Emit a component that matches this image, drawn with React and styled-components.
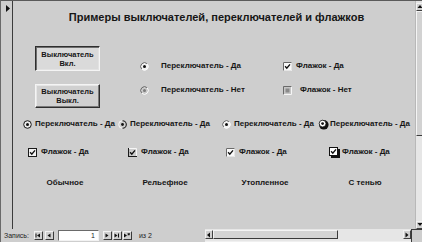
import React from "react";
import styled, { createGlobalStyle } from "styled-components";

const GlobalStyle = createGlobalStyle`
  html, body { margin: 0; padding: 0; background: #cecece; }
  body { font-family: "Liberation Sans", Arial, sans-serif; color: #161616; }
`;

const Window = styled.div`
  width: 422px;
  height: 242px;
  box-sizing: border-box;
  display: flex;
  flex-direction: column;
  background: #cecece;
  border-top: 1px solid #5a5a5a;
  border-left: 1px solid #6a6a6a;
  overflow: hidden;
`;

const Main = styled.div`
  display: flex;
  height: 228px;
  flex: none;
`;

const Selector = styled.div`
  width: 12px;
  flex: none;
  box-sizing: border-box;
  border-right: 1px solid #3c3c3c;
  padding: 4px 0 0 5px;
  svg { display: block; }
`;

const Body = styled.div`
  flex: 1;
  display: flex;
  flex-direction: column;
  padding-top: 10px;
`;

const Title = styled.h1`
  margin: 0;
  padding-left: 5px;
  font-size: 11px;
  line-height: 13px;
  font-weight: bold;
  text-align: center;
  white-space: nowrap;
`;

const Upper = styled.div`
  display: flex;
  margin-top: 22px;
  padding-left: 22px;
`;

const ButtonCol = styled.div`
  display: flex;
  flex-direction: column;
  gap: 13px;
`;

const Toggle = styled.div`
  width: 65px;
  height: ${(p) => (p.$pressed ? 25 : 24)}px;
  box-sizing: border-box;
  display: flex;
  flex-direction: column;
  align-items: center;
  justify-content: center;
  font-size: 7.5px;
  line-height: 9px;
  font-weight: bold;
  border: 1px solid;
  border-color: ${(p) =>
    p.$pressed ? "#2e2e2e #f4f4f4 #f4f4f4 #2e2e2e" : "#f4f4f4 #2e2e2e #2e2e2e #f4f4f4"};
  box-shadow: ${(p) =>
    p.$pressed
      ? "inset 1px 1px 0 #6e6e6e, inset -1px -1px 0 #e2e2e2"
      : "inset -1px -1px 0 #7a7a7a, inset 1px 1px 0 #e6e6e6"};
  background: ${(p) => (p.$pressed ? "#dadada" : "#d0d0d0")};
  padding-top: ${(p) => (p.$pressed ? 1 : 0)}px;
`;

const Options = styled.div`
  display: grid;
  grid-template-columns: 143px auto;
  grid-template-rows: 12px 12px;
  row-gap: 12px;
  padding-top: 14px;
  margin-left: 40px;
`;

const Item = styled.div`
  display: flex;
  align-items: center;
  gap: ${(p) => p.$gap ?? 4}px;
  margin-left: ${(p) => p.$indent ?? 0}px;
  font-size: 8px;
  line-height: 12px;
  font-weight: bold;
  white-space: nowrap;
  height: 12px;
  svg { display: block; flex: none; }
`;

const Grid4 = styled.div`
  display: grid;
  grid-template-columns: repeat(4, 100px);
  margin-left: 2px;
  margin-top: ${(p) => p.$top}px;
  height: 12px;
`;

const Caption = styled.div`
  text-align: center;
  font-size: 8px;
  line-height: 12px;
  font-weight: bold;
  white-space: nowrap;
`;

/* scrollbars */
const VScroll = styled.div`
  width: 11px;
  flex: none;
  box-sizing: border-box;
  border-left: 1px solid #b8b8b8;
  border-right: 2px solid #3a3a3a;
  background: #e2e2e2;
  display: flex;
  flex-direction: column;
  padding-top: 2px;
`;

const ArrowBtn = styled.div`
  flex: none;
  width: ${(p) => p.$w}px;
  height: ${(p) => p.$h}px;
  box-sizing: border-box;
  background: #cfcfcf;
  border: 1px solid;
  border-color: #f2f2f2 #404040 #404040 #f2f2f2;
  display: flex;
  align-items: center;
  justify-content: center;
  svg { display: block; }
`;

const VThumb = styled.div`
  flex: none;
  height: ${(p) => p.$len}px;
  box-sizing: border-box;
  background: #d2d2d2;
  border: 1px solid;
  border-color: #f4f4f4 #3c3c3c #3c3c3c #f4f4f4;
`;

const Track = styled.div`
  flex: 1;
  background: #e6e6e6;
`;

const Bottom = styled.div`
  display: flex;
  height: 13px;
  flex: none;
`;

const Nav = styled.div`
  width: 204px;
  flex: none;
  display: flex;
  align-items: center;
  padding-left: 3px;
  box-sizing: border-box;
  font-size: 7px;
  color: #222;
`;

const NavLabel = styled.span`
  margin-right: ${(p) => p.$mr ?? 0}px;
  margin-left: ${(p) => p.$ml ?? 0}px;
  white-space: nowrap;
`;

const NavBtn = styled.div`
  width: 9px;
  height: 9px;
  box-sizing: border-box;
  margin-right: ${(p) => p.$mr ?? 1}px;
  border: 1px solid;
  border-color: #f2f2f2 #3a3a3a #3a3a3a #f2f2f2;
  background: #cfcfcf;
  display: flex;
  align-items: center;
  justify-content: center;
  svg { display: block; }
`;

const RecordInput = styled.div`
  width: 41px;
  height: 11px;
  box-sizing: border-box;
  margin: 0 4px 0 3px;
  background: #fff;
  border: 1px solid;
  border-color: #6a6a6a #f2f2f2 #f2f2f2 #6a6a6a;
  font-size: 7px;
  line-height: 9px;
  text-align: right;
  padding-right: 3px;
`;

const HScroll = styled.div`
  flex: 1;
  display: flex;
  align-items: stretch;
  padding: 1px 0 2px;
  background: #e6e6e6;
  border-bottom: 1px solid #f0f0f0;
`;

const HThumb = styled.div`
  width: 125px;
  flex: none;
  box-sizing: border-box;
  background: #d4d4d4;
  border: 1px solid;
  border-color: #f4f4f4 #3a3a3a #3a3a3a #f4f4f4;
`;

const Corner = styled.div`
  width: 11px;
  flex: none;
  background: #cecece;
  border-left: 1px solid #3a3a3a;
  border-top: 1px solid #3a3a3a;
  box-sizing: border-box;
`;

/* icons */
const Radio = ({ kind }) => {
  if (kind === "plain")
    return (
      <svg width="9" height="9" viewBox="0 0 9 9">
        <circle cx="4.5" cy="4.5" r="3.8" fill="#ececec" stroke="#1a1a1a" strokeWidth="1" />
        <circle cx="4.5" cy="4.5" r="1.5" fill="#111" />
      </svg>
    );
  if (kind === "etched")
    return (
      <svg width="9" height="9" viewBox="0 0 9 9">
        <path d="M4.5 0.7 A3.8 3.8 0 0 0 4.5 8.3" stroke="#f6f6f6" strokeWidth="1" fill="none" />
        <path d="M4.5 0.7 A3.8 3.8 0 0 1 4.5 8.3" stroke="#1a1a1a" strokeWidth="1.1" fill="none" />
        <circle cx="4.5" cy="4.5" r="1.4" fill="#111" />
      </svg>
    );
  if (kind === "shadow")
    return (
      <svg width="11" height="11" viewBox="0 0 11 11">
        <circle cx="5.8" cy="5.8" r="4.8" fill="#111" />
        <circle cx="4.6" cy="4.6" r="3.4" fill="#fff" stroke="#111" strokeWidth="0.8" />
        <circle cx="4.6" cy="4.6" r="1.4" fill="#111" />
      </svg>
    );
  const off = kind === "disabled";
  return (
    <svg width="9" height="9" viewBox="0 0 9 9">
      <circle cx="4.5" cy="4.5" r="3.8" fill={off ? "#c9c9c9" : "#f2f2f2"} />
      <path d="M1.8 7.2 A3.8 3.8 0 0 1 7.2 1.8" stroke="#6a6a6a" strokeWidth="1" fill="none" />
      <path d="M7.2 1.8 A3.8 3.8 0 0 1 1.8 7.2" stroke="#fafafa" strokeWidth="1" fill="none" />
      <circle cx="4.5" cy="4.5" r="1.5" fill={off ? "#7c7c7c" : "#111"} />
    </svg>
  );
};

const CheckMark = () => (
  <path d="M2.1 4.3 L3.8 6.2 L7 2.4" stroke="#111" strokeWidth="1.4" fill="none" />
);

const Check = ({ kind }) => {
  if (kind === "plain")
    return (
      <svg width="9" height="9" viewBox="0 0 9 9">
        <rect x="0.5" y="0.5" width="8" height="8" fill="#f2f2f2" stroke="#1a1a1a" />
        <CheckMark />
      </svg>
    );
  if (kind === "etched")
    return (
      <svg width="9" height="9" viewBox="0 0 9 9">
        <path d="M0.5 0 V8.5 H9" stroke="#1a1a1a" strokeWidth="1.2" fill="none" />
        <path d="M1 0.5 H8.5 V8" stroke="#f6f6f6" strokeWidth="1" fill="none" />
        <CheckMark />
      </svg>
    );
  if (kind === "shadow")
    return (
      <svg width="11" height="11" viewBox="0 0 11 11">
        <rect x="2" y="2" width="9" height="9" fill="#111" />
        <rect x="0.5" y="0.5" width="8" height="8" fill="#fff" stroke="#111" />
        <CheckMark />
      </svg>
    );
  if (kind === "disabled")
    return (
      <svg width="9" height="9" viewBox="0 0 9 9">
        <rect x="0" y="0" width="9" height="9" fill="#c6c6c6" />
        <path d="M0.5 9 V0.5 H9" stroke="#6a6a6a" fill="none" />
        <path d="M8.5 0.5 V8.5 H0.5" stroke="#f6f6f6" fill="none" />
        <rect x="2.5" y="2.5" width="4" height="4" fill="#8a8a8a" />
      </svg>
    );
  return (
    <svg width="9" height="9" viewBox="0 0 9 9">
      <rect x="0" y="0" width="9" height="9" fill="#fafafa" />
      <path d="M0.5 9 V0.5 H9" stroke="#6a6a6a" fill="none" />
      <path d="M8.5 0.5 V8.5 H0.5" stroke="#e6e6e6" fill="none" />
      <CheckMark />
    </svg>
  );
};

const Tri = ({ dir }) => {
  const d = {
    up: "M0.5 4 L3 1 L5.5 4 Z",
    down: "M0.5 1 L3 4 L5.5 1 Z",
    left: "M4 0.5 L1 3 L4 5.5 Z",
    right: "M1.5 0.5 L4.5 3 L1.5 5.5 Z",
  }[dir];
  return (
    <svg width="6" height="6" viewBox="0 0 6 6">
      <path d={d} fill="#111" />
    </svg>
  );
};

const NavGlyph = ({ kind }) => {
  const parts = {
    first: (
      <>
        <rect x="0.5" y="0.5" width="1" height="4" fill="#111" />
        <path d="M5 0.5 L2 2.5 L5 4.5 Z" fill="#111" />
      </>
    ),
    prev: <path d="M4.5 0.5 L1.5 2.5 L4.5 4.5 Z" fill="#111" />,
    next: <path d="M1.5 0.5 L4.5 2.5 L1.5 4.5 Z" fill="#111" />,
    last: (
      <>
        <path d="M0.5 0.5 L3.5 2.5 L0.5 4.5 Z" fill="#111" />
        <rect x="4" y="0.5" width="1" height="4" fill="#111" />
      </>
    ),
    new: (
      <>
        <path d="M0 0.5 L3 2.5 L0 4.5 Z" fill="#111" />
        <path d="M3.5 1.2 H6 M4.75 0 V2.5 M3.8 0.3 L5.7 2.2 M5.7 0.3 L3.8 2.2" stroke="#111" strokeWidth="0.7" />
      </>
    ),
  }[kind];
  return (
    <svg width="6" height="5" viewBox="0 0 6 5">
      {parts}
    </svg>
  );
};

const lowerRadios = [
  { kind: "plain", indent: 8 },
  { kind: "etched", indent: 3 },
  { kind: "sunken", indent: 7 },
  { kind: "shadow", indent: 3 },
];
const lowerChecks = [
  { kind: "plain", indent: 13 },
  { kind: "etched", indent: 13 },
  { kind: "sunken", indent: 11 },
  { kind: "shadow", indent: 14 },
];
const captions = ["Обычное", "Рельефное", "Утопленное", "С тенью"];

export default function App() {
  return (
    <>
      <GlobalStyle />
      <Window>
        <Main>
          <Selector>
            <svg width="4" height="7" viewBox="0 0 4 7">
              <path d="M0 0 L4 3.5 L0 7 Z" fill="#111" />
            </svg>
          </Selector>
          <Body>
            <Title>Примеры выключателей, переключателей и флажков</Title>
            <Upper>
              <ButtonCol>
                <Toggle $pressed>
                  <span>Выключатель</span>
                  <span>Вкл.</span>
                </Toggle>
                <Toggle>
                  <span>Выключатель</span>
                  <span>Выкл.</span>
                </Toggle>
              </ButtonCol>
              <Options>
                <Item $gap={12}>
                  <Radio kind="sunken" />
                  Переключатель - Да
                </Item>
                <Item $gap={4}>
                  <Check kind="sunken" />
                  Флажок - Да
                </Item>
                <Item $gap={12}>
                  <Radio kind="disabled" />
                  Переключатель - Нет
                </Item>
                <Item $gap={8}>
                  <Check kind="disabled" />
                  Флажок - Нет
                </Item>
              </Options>
            </Upper>
            <Grid4 $top={10}>
              {lowerRadios.map((r, i) => (
                <Item key={i} $indent={r.indent} $gap={r.kind === "shadow" ? 1 : 3}>
                  <Radio kind={r.kind} />
                  Переключатель - Да
                </Item>
              ))}
            </Grid4>
            <Grid4 $top={16}>
              {lowerChecks.map((c, i) => (
                <Item key={i} $indent={c.indent} $gap={c.kind === "shadow" ? 2 : 4}>
                  <Check kind={c.kind} />
                  Флажок - Да
                </Item>
              ))}
            </Grid4>
            <Grid4 $top={19}>
              {captions.map((c) => (
                <Caption key={c}>{c}</Caption>
              ))}
            </Grid4>
          </Body>
          <VScroll>
            <ArrowBtn $w={8} $h={8}>
              <Tri dir="up" />
            </ArrowBtn>
            <VThumb $len={125} />
            <Track />
            <ArrowBtn $w={8} $h={8}>
              <Tri dir="down" />
            </ArrowBtn>
          </VScroll>
        </Main>
        <Bottom>
          <Nav>
            <NavLabel $mr={5}>Запись:</NavLabel>
            <NavBtn $mr={2}>
              <NavGlyph kind="first" />
            </NavBtn>
            <NavBtn>
              <NavGlyph kind="prev" />
            </NavBtn>
            <RecordInput>1</RecordInput>
            <NavBtn $mr={1}>
              <NavGlyph kind="next" />
            </NavBtn>
            <NavBtn $mr={1}>
              <NavGlyph kind="last" />
            </NavBtn>
            <NavBtn $mr={0}>
              <NavGlyph kind="new" />
            </NavBtn>
            <NavLabel $ml={7}>из 2</NavLabel>
          </Nav>
          <HScroll>
            <ArrowBtn $w={8} $h={9}>
              <Tri dir="left" />
            </ArrowBtn>
            <HThumb />
            <Track />
            <ArrowBtn $w={8} $h={9}>
              <Tri dir="right" />
            </ArrowBtn>
          </HScroll>
          <Corner />
        </Bottom>
      </Window>
    </>
  );
}
